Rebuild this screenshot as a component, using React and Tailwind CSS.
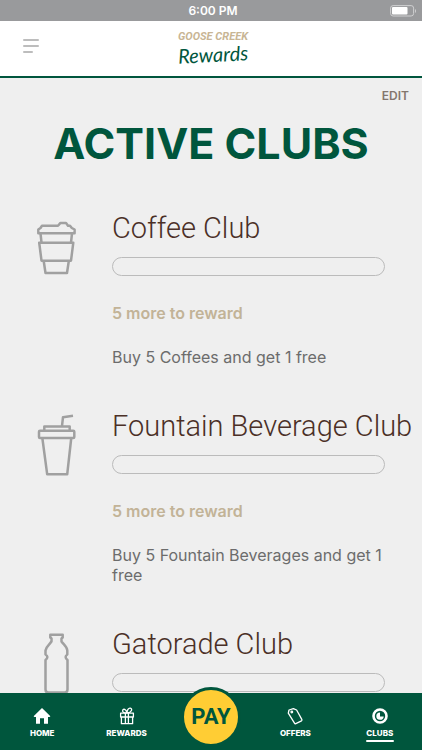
import React from "react";

function CoffeeIcon() {
  return (
    <svg width="80" height="80" viewBox="0 0 80 80" fill="none" stroke="#a0a0a0" strokeWidth="2.5" strokeLinejoin="round" aria-hidden="true">
      <path d="M18.3 23.3V19.5L20.5 18L22 15.8H38L40.5 12.9H46L48 15.8H50L51.8 18L54.6 19.5V23.3Z" />
      <path d="M20.5 23.5L21.5 32.5M52 23.5L51 32.5M19.2 32.7H53.3L51 50.7H21.5ZM23.7 51L25.5 63H47L48.8 51" />
    </svg>
  );
}

function FountainIcon() {
  return (
    <svg width="80" height="80" viewBox="0 0 80 80" fill="none" stroke="#a0a0a0" strokeWidth="2.5" strokeLinejoin="round" aria-hidden="true">
      <path d="M42 18L43 9.2L53 7.8M24.3 22V18.5H49.7V22" />
      <rect x="19" y="22.7" width="35.3" height="7.3" rx="1" />
      <path d="M22.4 30.5L27.2 66.3H47.2L51.2 30.5" />
    </svg>
  );
}

function BottleIcon() {
  return (
    <svg width="80" height="80" viewBox="0 0 80 80" fill="none" stroke="#a0a0a0" strokeWidth="2.5" strokeLinejoin="round" aria-hidden="true">
      <path d="M30.3 8.8H42.7V11.5L41.5 12.5V15.5C43.5 18.5 47 20.5 47.3 24.5V28.5C45 30 45 32 47.5 34V63.5C47.5 65.5 46.5 66.5 44.5 66.5H28.5C26.5 66.5 25.5 65.5 25.5 63.5V34C28 32 28 30 25.5 28.5V24.5C26 20.5 29.5 18.5 31.5 15.5V12.5L30.3 11.5Z" />
    </svg>
  );
}

function HomeIcon() {
  return (
    <svg width="18" height="18" viewBox="0 0 18 18" fill="#ffffff" aria-hidden="true">
      <path d="M9 1L17.4 9.2L16.6 10H15V16.8H11V11.2H7V16.8H3V10H1.4L.6 9.2Z" />
    </svg>
  );
}

function GiftIcon() {
  return (
    <svg width="18" height="18" viewBox="0 0 18 18" fill="none" stroke="#ffffff" strokeWidth="1.3" strokeLinejoin="round" aria-hidden="true">
      <path d="M2.6 6.2H15.4V10H2.6ZM3.4 10V16.7H14.6V10M7.4 6.2V16.7M10.4 6.2V16.7" />
      <path d="M8.6 6C5.5 6 4.2 4.8 4.7 3.2C5.3 1.3 8 2.3 8.7 5.2M9 6C9 3 10.5.8 12.3 1.1C14.8 1.6 13.8 5.5 9.5 6" />
    </svg>
  );
}

function TagIcon() {
  return (
    <svg width="18" height="18" viewBox="0 0 18 18" fill="none" stroke="#ffffff" strokeWidth="1.3" strokeLinejoin="round" aria-hidden="true">
      <path d="M3 3L7.4 1.6L10.6 3L15.8 12.4Q16.3 13.3 15.5 13.8L9.8 16.7Q8.9 17 8.5 16.2L2.3 6.2Z" />
      <circle cx="5.8" cy="5" r=".8" />
    </svg>
  );
}

function ClubIcon() {
  return (
    <svg width="18" height="18" viewBox="0 0 18 18" fill="none" stroke="#ffffff" aria-hidden="true">
      <circle cx="9" cy="9" r="6.5" strokeWidth="2.6" />
      <path d="M9 5.4A3.7 3.7 0 1 0 12.7 9.4H9Z" fill="#ffffff" stroke="none" />
    </svg>
  );
}

const clubs = [
  { name: "Coffee Club", status: "5 more to reward", text: "Buy 5 Coffees and get 1 free", Icon: CoffeeIcon },
  { name: "Fountain Beverage Club", status: "5 more to reward", text: "Buy 5 Fountain Beverages and get 1 free", Icon: FountainIcon },
  { name: "Gatorade Club", Icon: BottleIcon },
];

function Club({ name, status, text, Icon }) {
  return (
    <section className="grid grid-cols-[92px_1fr] pl-5">
      <Icon />
      <div className="min-w-0 pr-2">
        <h2 className="font-['Roboto',sans-serif] text-[29px] leading-9 font-light whitespace-nowrap text-[#4b3027]">{name}</h2>
        <div role="progressbar" aria-label={name} aria-valuemin={0} aria-valuemax={5} aria-valuenow={0} className="mt-[11px] mr-[29px] h-[19px] rounded-full border border-[#bbbbbb]" />
        {status && <p className="mt-[27px] text-base leading-5 font-semibold text-[#c2b397]">{status}</p>}
        {text && <p className="mt-6 mr-4 text-base leading-5 text-[#6c6c6c]">{text}</p>}
      </div>
    </section>
  );
}

function NavItem({ label, Icon, active }) {
  return (
    <a href={"#" + label.toLowerCase()} aria-current={active ? "page" : undefined} className="flex flex-col items-center pt-[14px] text-[8px] leading-3 font-extrabold text-white">
      <Icon />
      <span className="mt-[2px]">{label}</span>
      {active && <span className="mt-px h-[2px] w-7 rounded-full bg-white" />}
    </a>
  );
}

export default function App() {
  return (
    <div className="flex h-screen flex-col bg-[#efefef] font-['Inter',sans-serif]">
      <div className="grid h-[21px] shrink-0 grid-cols-[1fr_auto_1fr] items-center bg-[#999a9c] px-[6px] text-white">
        <span />
        <time className="pl-1 text-xs leading-4 font-semibold">6:00 PM</time>
        <svg className="justify-self-end" width="26" height="12" viewBox="0 0 26 12" fill="none" aria-hidden="true">
          <rect x=".6" y=".6" width="23" height="10.4" rx="2.5" stroke="#d0d0d1" />
          <rect x="2" y="2" width="15.5" height="7.6" rx="1" fill="#ffffff" />
          <path d="M25 4V8Q26 7.4 26 6T25 4" fill="#d0d0d1" />
        </svg>
      </div>
      <header className="grid h-[57px] shrink-0 grid-cols-[1fr_auto_1fr] border-b-2 border-[#00563d] bg-white px-[23px]">
        <button type="button" aria-label="Menu" className="mt-[18px] flex w-4 flex-col gap-1 self-start">
          <span className="h-[2px] w-4 rounded-full bg-[#bdbdbd]" />
          <span className="h-[2px] w-4 rounded-full bg-[#bdbdbd]" />
          <span className="h-[2px] w-[10px] rounded-full bg-[#bdbdbd]" />
        </button>
        <div className="flex flex-col items-center pt-[11px] pl-1 italic">
          <span className="font-['Roboto',sans-serif] text-[11px] leading-[10px] font-bold text-[#c8b594]">GOOSE CREEK</span>
          <span className="-rotate-3 font-['Lato',sans-serif] text-xl leading-6 text-[#00563d]">Rewards</span>
        </div>
      </header>
      <main className="min-h-0 flex-1 overflow-y-auto [scrollbar-width:none]">
        <div className="flex justify-end px-[13px] pt-[10px]">
          <button type="button" className="text-xs leading-4 font-semibold text-[#84766d]">EDIT</button>
        </div>
        <h1 className="mt-[15px] text-center text-[43px] leading-[48px] font-bold text-[#00563d]">ACTIVE CLUBS</h1>
        <div className="mt-[43px] flex flex-col gap-[41px]">
          {clubs.map((club) => (
            <Club key={club.name} {...club} />
          ))}
        </div>
      </main>
      <nav aria-label="Main" className="relative grid h-[57px] shrink-0 grid-cols-5 bg-[#00563d]">
        <NavItem label="HOME" Icon={HomeIcon} />
        <NavItem label="REWARDS" Icon={GiftIcon} />
        <a href="#pay" className="absolute -top-[6px] left-1/2 flex size-[60px] -translate-x-1/2 items-center justify-center rounded-full border-[3px] border-[#00563d] bg-[#ffcd34] font-['Roboto',sans-serif] text-[22px] leading-6 font-bold text-[#00563d]">PAY</a>
        <span />
        <NavItem label="OFFERS" Icon={TagIcon} />
        <NavItem label="CLUBS" Icon={ClubIcon} active />
      </nav>
    </div>
  );
}
